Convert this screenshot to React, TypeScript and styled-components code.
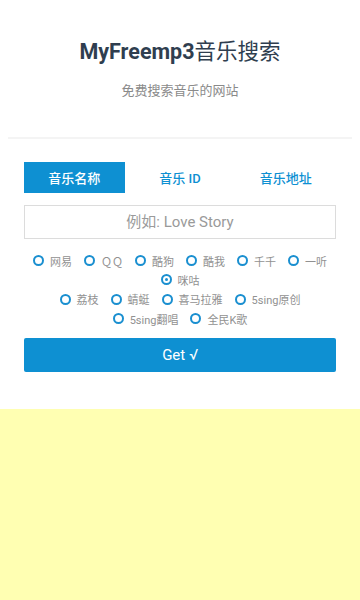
import React, { useState } from "react";
import styled, { createGlobalStyle } from "styled-components";

const Global = createGlobalStyle`
  html, body { margin: 0; padding: 0; background: #fff; }
  body { font-family: Roboto, "Noto Sans CJK SC", sans-serif; }
  * { box-sizing: border-box; }
`;

const Page = styled.div`
  min-height: 100vh;
  display: flex;
  flex-direction: column;
`;

const Header = styled.header`
  padding-top: 39px;
  text-align: center;
`;

const Title = styled.h1`
  margin: 0;
  font-size: 21.5px;
  line-height: 26px;
  font-weight: 700;
  color: #2f3e4f;
`;

const Cjk = styled.span`
  font-weight: 400;
`;

const Subtitle = styled.p`
  margin: 17px 0 0;
  font-size: 13px;
  line-height: 18px;
  color: #8a8a8a;
`;

const Divider = styled.hr`
  margin: 37px 8px 0;
  border: 0;
  border-top: 2px solid #f4f4f4;
`;

const Form = styled.section`
  padding: 23px 24px 0;
  display: flex;
  flex-direction: column;
`;

const Tabs = styled.div`
  display: grid;
  grid-template-columns: repeat(3, 1fr);
  column-gap: 5px;
`;

const Tab = styled.button<{ $active?: boolean }>`
  height: 31px;
  border: 0;
  padding: 0;
  font-family: inherit;
  font-size: 13px;
  font-weight: 500;
  background: ${(p) => (p.$active ? "#0e90d2" : "transparent")};
  color: ${(p) => (p.$active ? "#fff" : "#0e90d2")};
`;

const Input = styled.input`
  margin-top: 12px;
  height: 34px;
  width: 100%;
  border: 1px solid #dcdcdc;
  font-family: inherit;
  font-size: 15px;
  text-align: center;
  color: #555;
  outline: none;
  &::placeholder { color: #9a9a9a; }
`;

const Sources = styled.div`
  margin-top: 12px;
  display: flex;
  flex-direction: column;
`;

const SourceGroup = styled.div`
  display: flex;
  flex-wrap: wrap;
  justify-content: center;
  column-gap: 12px;
`;

const Option = styled.label`
  display: inline-flex;
  align-items: center;
  height: 19.3px;
  font-size: 11px;
  color: #919191;
  gap: 6px;
`;

const Dot = styled.span<{ $checked?: boolean }>`
  width: 11px;
  height: 11px;
  border-radius: 50%;
  border: 2px solid #1a8fd0;
  display: inline-flex;
  align-items: center;
  justify-content: center;
  &::after {
    content: "";
    width: 3px;
    height: 3px;
    border-radius: 50%;
    background: ${(p) => (p.$checked ? "#1a8fd0" : "transparent")};
  }
`;

const GetButton = styled.button`
  margin-top: 10px;
  height: 34px;
  border: 0;
  border-radius: 2px;
  background: #0e90d2;
  color: #fff;
  font-family: inherit;
  font-size: 15px;
`;

const Footer = styled.footer`
  margin-top: 37px;
  flex: 1;
  background: #ffffb2;
`;

const groups = [
  ["网易", "ＱＱ", "酷狗", "酷我", "千千", "一听", "咪咕"],
  ["荔枝", "蜻蜓", "喜马拉雅", "5sing原创", "5sing翻唱", "全民K歌"],
];

export default function App() {
  const [tab, setTab] = useState(0);
  const [src, setSrc] = useState("咪咕");
  return (
    <Page>
      <Global />
      <Header>
        <Title>
          MyFreemp3<Cjk>音乐搜索</Cjk>
        </Title>
        <Subtitle>免费搜索音乐的网站</Subtitle>
      </Header>
      <Divider />
      <Form>
        <Tabs>
          {["音乐名称", "音乐 ID", "音乐地址"].map((t, i) => (
            <Tab key={t} $active={tab === i} onClick={() => setTab(i)}>
              {t}
            </Tab>
          ))}
        </Tabs>
        <Input placeholder="例如: Love Story" />
        <Sources>
          {groups.map((g, gi) => (
            <SourceGroup key={gi}>
              {g.map((s) => (
                <Option key={s} onClick={() => setSrc(s)}>
                  <Dot $checked={src === s} />
                  {s}
                </Option>
              ))}
            </SourceGroup>
          ))}
        </Sources>
        <GetButton>Get √</GetButton>
      </Form>
      <Footer />
    </Page>
  );
}
